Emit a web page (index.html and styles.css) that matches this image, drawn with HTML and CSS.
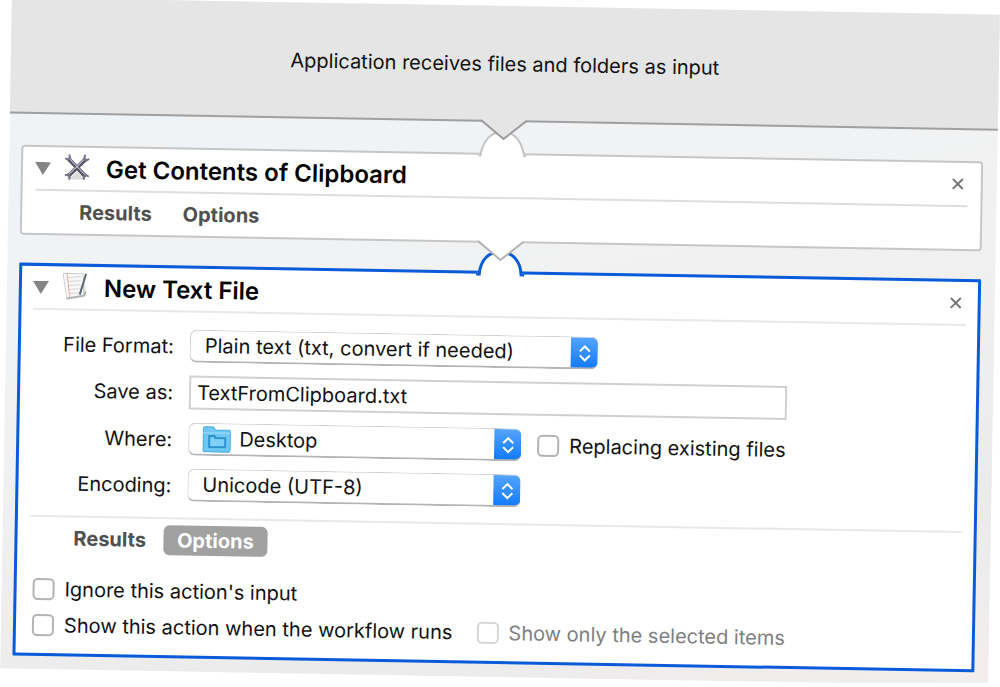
FILE: index.html
```html
<!DOCTYPE html>
<html lang="en">
<head>
    <meta charset="UTF-8">
    <meta name="viewport" content="width=device-width, initial-scale=1.0">
    <title>Workflow</title>
    <link rel="stylesheet" href="styles.css">
</head>
<body>
    <main class="workflow">
        <header class="intro">
            <p>Application receives files and folders as input</p>
            <svg class="arrow" width="50" height="23" viewBox="0 0 50 23" aria-hidden="true">
                <path d="M3 0H47V3L25 21L3 3Z" fill="#e5e5e5"/>
                <path d="M2 3H3L25 21L47 3H48" fill="none" stroke="#9b9b9b" stroke-width="2"/>
            </svg>
        </header>

        <div class="actions">
            <section class="action">
                <svg class="bump" width="50" height="26" viewBox="0 0 50 26" aria-hidden="true">
                    <path d="M2 26V23H3C6 8 14 1 25 1S44 8 47 23H48V26Z" fill="#fff"/>
                    <path d="M1 25H3C6 9 14 1 25 1S44 9 47 25H49" fill="none" stroke="#c4c4c4" stroke-width="2"/>
                </svg>
                <div class="action-header">
                    <button class="toggle" aria-label="Collapse"><svg width="16" height="13" viewBox="0 0 16 13"><path d="M0 0H16L8 13Z" fill="#858585"/></svg></button>
                    <svg class="action-icon" width="26" height="28" viewBox="0 0 26 28" aria-hidden="true">
                        <path d="M5 26L13 18L22 26Z" fill="#dcdcdc"/>
                        <path d="M4 5L22 23" stroke="#55535f" stroke-width="4"/>
                        <path d="M22 5L4 23" stroke="#55535f" stroke-width="4"/>
                        <path d="M4 4L22 22M21 5L4 22" stroke="#c9c6dc" stroke-width="1"/>
                        <path d="M1 5L4 6L6 4L5 1M21 1L20 5L22 7L25 5M1 22L4 21L6 24L5 26M20 26V23L22 21L25 23" fill="none" stroke="#77748c" stroke-width="2"/>
                    </svg>
                    <h2>Get Contents of Clipboard</h2>
                    <button class="close" aria-label="Remove"><svg width="12" height="12" viewBox="0 0 12 12"><path d="M1 1L11 11M11 1L1 11" stroke="#777" stroke-width="2"/></svg></button>
                </div>
                <div class="tabs">
                    <button>Results</button>
                    <button>Options</button>
                </div>
                <svg class="arrow" width="50" height="23" viewBox="0 0 50 23" aria-hidden="true">
                    <path d="M3 0H47V3L25 21L3 3Z" fill="#fff"/>
                    <path d="M2 3H3L25 21L47 3H48" fill="none" stroke="#b4b4b4" stroke-width="2"/>
                </svg>
            </section>

            <section class="action selected">
                <svg class="bump" width="50" height="26" viewBox="0 0 50 26" aria-hidden="true">
                    <path d="M2 26V23H3C5 9 14 2 25 2S45 9 47 23H48V26Z" fill="#fff"/>
                    <path d="M1 25H4C5 9 14 2 25 2S45 9 46 25H49" fill="none" stroke="#0a5bd9" stroke-width="3"/>
                </svg>
                <div class="action-header">
                    <button class="toggle" aria-label="Collapse"><svg width="16" height="13" viewBox="0 0 16 13"><path d="M0 0H16L8 13Z" fill="#858585"/></svg></button>
                    <svg class="action-icon" width="26" height="28" viewBox="0 0 26 28" aria-hidden="true">
                        <path d="M2 2L21 1L25 23L6 27Z" fill="#dedede"/>
                        <path d="M1 1L21 1L22 23L5 26Z" fill="#f8f8f8" stroke="#d0d0d0" stroke-width="1"/>
                        <path d="M5 5L19 4M5 9L19 8M6 13L19 12M6 17L19 16M7 21L18 20" stroke="#d6d6d6" stroke-width="1"/>
                        <path d="M5 1L8 25" stroke="#f3aaa8" stroke-width="1"/>
                        <path d="M24 1L18 22" stroke="#5d6874" stroke-width="2"/>
                        <path d="M5 26L22 23L24 19" fill="none" stroke="#b5b5b5" stroke-width="2"/>
                    </svg>
                    <h2>New Text File</h2>
                    <button class="close" aria-label="Remove"><svg width="12" height="12" viewBox="0 0 12 12"><path d="M1 1L11 11M11 1L1 11" stroke="#777" stroke-width="2"/></svg></button>
                </div>

                <form class="settings">
                    <label for="format">File Format:</label>
                    <div class="field">
                        <div class="popup wide">
                            <select id="format"><option>Plain text (txt, convert if needed)</option></select>
                            <svg class="stepper" width="14" height="18" viewBox="0 0 14 18" aria-hidden="true"><path d="M2 7L7 2L12 7M2 11L7 16L12 11"/></svg>
                        </div>
                    </div>

                    <label for="name">Save as:</label>
                    <div class="field">
                        <input class="name" id="name" type="text" value="TextFromClipboard.txt">
                    </div>

                    <label for="where">Where:</label>
                    <div class="field">
                        <div class="popup folder">
                            <svg class="folder-icon" width="29" height="27" viewBox="0 0 29 27" aria-hidden="true">
                                <path d="M1 3Q1 1 3 1H11L13 4H27Q28 4 28 6V24Q28 26 26 26H3Q1 26 1 24Z" fill="#6fc8f3" stroke="#45a9dc" stroke-width="1"/>
                                <path d="M1 7H28" stroke="#a3def9" stroke-width="1"/>
                                <path d="M7 10H12L13 12H23V21H7Z" fill="#7fd0f7" stroke="#2b93cd" stroke-width="2"/>
                            </svg>
                            <select id="where"><option>Desktop</option></select>
                            <svg class="stepper" width="14" height="18" viewBox="0 0 14 18" aria-hidden="true"><path d="M2 7L7 2L12 7M2 11L7 16L12 11"/></svg>
                        </div>
                        <label class="check"><input type="checkbox">Replacing existing files</label>
                    </div>

                    <label for="encoding">Encoding:</label>
                    <div class="field">
                        <div class="popup">
                            <select id="encoding"><option>Unicode (UTF-8)</option></select>
                            <svg class="stepper" width="14" height="18" viewBox="0 0 14 18" aria-hidden="true"><path d="M2 7L7 2L12 7M2 11L7 16L12 11"/></svg>
                        </div>
                    </div>
                </form>

                <div class="tabs">
                    <button>Results</button>
                    <button class="active">Options</button>
                </div>

                <div class="options">
                    <label class="check"><input type="checkbox">Ignore this action's input</label>
                    <div class="option-row">
                        <label class="check"><input type="checkbox">Show this action when the workflow runs</label>
                        <label class="check disabled"><input type="checkbox" disabled>Show only the selected items</label>
                    </div>
                </div>
            </section>
        </div>
    </main>
</body>
</html>
```
FILE: styles.css
```css
* {
    box-sizing: border-box;
}
body {
    margin: 0;
    overflow: hidden;
    background: #fff;
    color: #111;
    font-family: Inter, "Liberation Sans", sans-serif;
    font-size: 20px;
    line-height: 24px;
}
button, input, select {
    font: inherit;
    color: inherit;
}
button {
    padding: 0;
    border: none;
    background: none;
}
svg {
    display: block;
}
.workflow {
    margin: 6px;
    background: linear-gradient(165deg, #f0f3f6 20%, #f1f1f1 50%, #ebebeb 80%, #f2eeed);
    transform: rotate(1deg);
}
.intro {
    position: relative;
    z-index: 2;
    display: flex;
    align-items: center;
    justify-content: center;
    height: 116px;
    padding-top: 2px;
    background: #e5e5e5;
    border-bottom: 2px solid #a0a0a0;
}
.intro p {
    margin: 0;
}
.arrow {
    position: absolute;
    z-index: 2;
    top: calc(100% - 2px);
    left: calc(50% - 25px);
}
.bump {
    position: absolute;
    bottom: 100%;
    left: calc(50% - 25px);
    margin-bottom: -2px;
}
.actions {
    display: flex;
    flex-direction: column;
    gap: 28px;
    padding: 31px 14px 13px 12px;
}
.action {
    position: relative;
    padding: 0 13px;
    background: #fff;
    border: 2px solid #c6c6c6;
    border-radius: 4px;
}
.action:first-child {
    z-index: 1;
}
.selected {
    padding: 0 12px;
    border: 3px solid #0a5bd9;
    border-radius: 1px;
}
.action-header {
    display: flex;
    align-items: center;
    height: 44px;
    border-bottom: 2px solid #dedede;
}
.selected .action-header {
    border-color: #e8e8e8;
}
.toggle {
    width: 16px;
    margin-left: -1px;
}
.action-icon {
    margin: 0 16px 2px 13px;
}
h2 {
    flex: 1;
    margin: 0;
    padding-top: 2px;
    color: #000;
    font-size: 24px;
    font-weight: 600;
}
.close {
    margin-right: 4px;
}
.tabs {
    display: flex;
    align-items: center;
    gap: 3px;
    height: 42px;
    padding-left: 30px;
}
.tabs button {
    height: 30px;
    padding: 0 14px;
    border-radius: 6px;
    color: #505050;
    font-weight: 700;
}
.tabs .active {
    background: #a1a1a1;
    color: #fff;
}
.settings {
    display: grid;
    grid-template-columns: 141px 1fr;
    gap: 13px 16px;
    align-items: center;
    padding: 17px 0 16px;
    border-bottom: 2px solid #e8e8e8;
    text-align: right;
}
.field {
    display: flex;
    align-items: center;
    gap: 16px;
    text-align: left;
}
.popup {
    position: relative;
    width: 333px;
}
.wide {
    width: 408px;
}
.popup select {
    display: block;
    width: 100%;
    height: 33px;
    padding: 0 40px 0 14px;
    appearance: none;
    background: linear-gradient(#56a6fb, #0f78fe) right / 27px 100% no-repeat, #fff;
    border: 1px solid #cfcfcf;
    border-right: none;
    border-bottom: 2px solid #b5b5b5;
    border-radius: 7px;
    background-origin: border-box;
    background-clip: border-box;
}
.popup.folder select {
    padding-left: 50px;
}
.stepper {
    position: absolute;
    top: 8px;
    right: 6px;
    fill: none;
    stroke: #fff;
    stroke-width: 2px;
    pointer-events: none;
}
.folder-icon {
    position: absolute;
    top: 3px;
    left: 14px;
    pointer-events: none;
}
.name {
    width: 598px;
    height: 34px;
    padding: 0 6px;
    background: #fff;
    border: 2px solid #d0d0d0;
}
.check {
    display: flex;
    align-items: center;
    gap: 10px;
}
.check input {
    width: 22px;
    height: 22px;
    margin: 0;
    appearance: none;
    background: #fff;
    border: 2px solid #b4b4b4;
    border-radius: 5px;
}
.options {
    display: flex;
    flex-direction: column;
    gap: 12px;
    padding: 18px 0 16px 4px;
}
.option-row {
    display: flex;
    gap: 24px;
}
.disabled {
    color: #808080;
}
.disabled input {
    border-color: #d6d6d6;
}
```
